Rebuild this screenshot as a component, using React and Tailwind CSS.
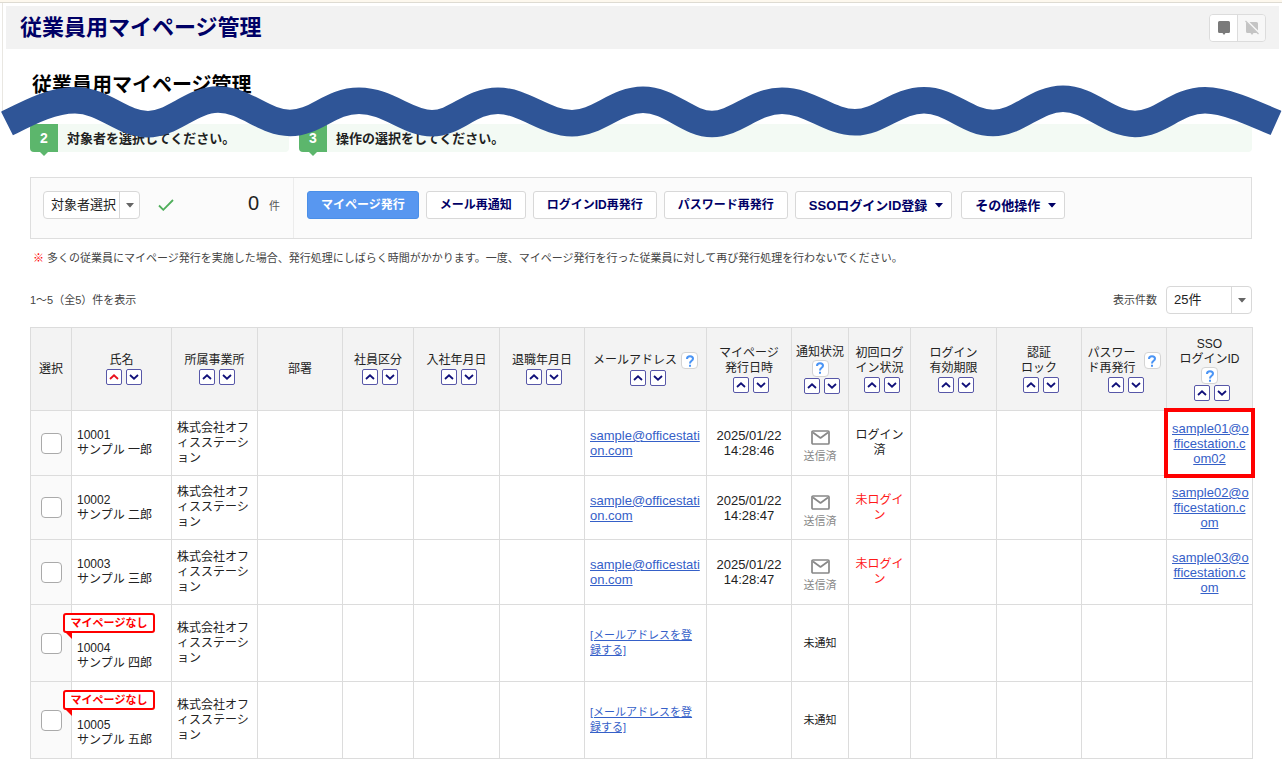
import { useState } from 'react'
import clsx from 'clsx'

const columns = [
  { width: 41, label: '選択' },
  { width: 100, label: '氏名', sort: true, active: 'asc' },
  { width: 86, label: '所属事業所', sort: true },
  { width: 85, label: '部署' },
  { width: 71, label: '社員区分', sort: true },
  { width: 86, label: '入社年月日', sort: true },
  { width: 85, label: '退職年月日', sort: true },
  { width: 122, label: 'メールアドレス', sort: true, help: 'side' },
  { width: 85, label: 'マイページ\n発行日時', sort: true },
  { width: 57, label: '通知状況', sort: true, help: 'below' },
  { width: 62, label: '初回ログ\nイン状況', sort: true },
  { width: 86, label: 'ログイン\n有効期限', sort: true },
  { width: 85, label: '認証\nロック', sort: true },
  { width: 85, label: 'パスワー\nド再発行', sort: true, help: 'side' },
  { width: 86, label: 'SSO\nログインID', sort: true, help: 'below' },
]

const company = '株式会社オフ\nィスステーシ\nョン'

const employees = [
  { id: '10001', name: 'サンプル 一郎', mail: true, issued: '2025/01/22\n14:28:46', login: 'ログイン\n済', sso: 'sample01@o\nfficestation.c\nom02', marked: true, height: 'h-[65px]' },
  { id: '10002', name: 'サンプル 二郎', mail: true, issued: '2025/01/22\n14:28:47', login: '未ログイ\nン', sso: 'sample02@o\nfficestation.c\nom', height: 'h-[64px]' },
  { id: '10003', name: 'サンプル 三郎', mail: true, issued: '2025/01/22\n14:28:47', login: '未ログイ\nン', sso: 'sample03@o\nfficestation.c\nom', height: 'h-[65px]' },
  { id: '10004', name: 'サンプル 四郎', height: 'h-[77px]' },
  { id: '10005', name: 'サンプル 五郎', height: 'h-[77px]' },
]

function Caret() {
  return (
    <svg viewBox="0 0 8 5" className="h-[5px] w-2 flex-shrink-0" fill="currentColor" aria-hidden="true">
      <path d="M0 0h8L4.6 4.100q-.6.6-1.2 0z" />
    </svg>
  )
}

function Dropdown({ label, className, children }) {
  return (
    <div className={clsx('relative h-7 rounded border border-[#d8d8d8] bg-white', className)}>
      <select aria-label={label} className="h-full w-full appearance-none bg-transparent pl-[7px] pr-5 text-[13px] leading-5 text-[#222] outline-none">
        {children}
      </select>
      <span className="pointer-events-none absolute inset-y-0 right-0 flex w-5 items-center justify-center border-l border-[#d8d8d8] text-[#666]">
        <Caret />
      </span>
    </div>
  )
}

function ActionButton({ primary, menu, children }) {
  return (
    <button
      type="button"
      className={clsx(
        'flex h-7 items-center gap-2 whitespace-nowrap rounded-[3px] border font-bold',
        menu ? 'pl-[13px] pr-2 text-[13px]' : 'px-[13px] text-xs',
        primary ? 'border-[#4a8fe8] bg-[#5897f0] text-white' : 'border-[#d8d8d8] bg-white text-[#000066]',
      )}
    >
      {children}
      {menu && <Caret />}
    </button>
  )
}

function HelpButton() {
  return (
    <button type="button" aria-label="ヘルプ" className="flex h-[17px] w-[17px] items-center justify-center rounded border border-[#d4d4d4] bg-white text-[#4a94f5]">
      <svg viewBox="0 0 10 12" className="h-3 w-2.5" fill="none" stroke="currentColor" strokeWidth="2" aria-hidden="true">
        <path d="M2 3.9C2 2 3.3 1.200 5 1.200s3 1 3 2.600C8 5.900 5 5.800 5 8.400" />
        <path d="M5 9.700v2" />
      </svg>
    </button>
  )
}

function SortButtons({ active }) {
  return (
    <div className="mt-px flex">
      {['asc', 'desc'].map(dir => (
        <button
          key={dir}
          type="button"
          aria-label={dir === 'asc' ? '昇順' : '降順'}
          className={clsx(
            'ml-1 flex h-4 w-4 items-center justify-center rounded-[2px] border border-[#5757a8] bg-white',
            active === dir ? 'text-[#e8101c]' : 'text-[#10107a]',
          )}
        >
          <svg viewBox="0 0 10 6" className="h-1.5 w-2.5" fill="none" stroke="currentColor" strokeWidth="1.8" aria-hidden="true">
            <path d={dir === 'asc' ? 'M1 5l4-3.700L9 5' : 'M1 1l4 3.700L9 1'} />
          </svg>
        </button>
      ))}
    </div>
  )
}

function HeaderCell({ column }) {
  return (
    <th scope="col" className="border border-[#dcdcdc] bg-[#f3f3f3] p-0 align-middle font-normal">
      <div className="flex flex-col items-center">
        <div className={clsx('flex items-center', column.label.includes('\n') ? 'gap-2' : 'gap-1')}>
          <span className="whitespace-pre">{column.label}</span>
          {column.help === 'side' && <HelpButton />}
        </div>
        {column.help === 'below' && <HelpButton />}
        {column.sort && <SortButtons active={column.active} />}
      </div>
    </th>
  )
}

function NoPageBadge() {
  return (
    <div className="absolute left-[-9px] top-2 flex h-5 w-[92px] items-center justify-center rounded-[3px] border-2 border-[#ff0000] bg-white text-[11px] font-bold leading-4 text-[#ff0000]">
      マイページなし
      <svg viewBox="0 0 8 8" className="absolute left-0 top-[17px] h-2 w-2" fill="#ff0000" aria-hidden="true">
        <path d="M0 0h7v7z" />
      </svg>
    </div>
  )
}

function Cell({ className, children }) {
  return <td className={clsx('whitespace-pre border border-[#dcdcdc] px-[5px] py-0', className)}>{children}</td>
}

function EmployeeRow({ employee, checked, onToggle }) {
  const { id, name, mail, issued, login, sso, marked, height } = employee
  return (
    <tr className={height}>
      <td className="border border-[#dcdcdc] bg-[#fafafa] p-0">
        <input
          type="checkbox"
          aria-label={name}
          checked={checked}
          onChange={onToggle}
          className="mx-auto block h-[21px] w-[21px] appearance-none rounded border border-[#aaa] bg-white checked:bg-[#5897f0]"
        />
      </td>
      <Cell className={clsx('relative', !mail && 'pt-[26px]')}>
        {!mail && <NoPageBadge />}
        {id + '\n' + name}
      </Cell>
      <Cell>{company}</Cell>
      <Cell />
      <Cell />
      <Cell />
      <Cell />
      <Cell className={mail ? 'text-[13px]' : 'text-[11px]'}>
        <a href={mail ? '#mail' : '#register'} className="text-[#3560c8] underline">
          {mail ? 'sample@officestati\non.com' : '[メールアドレスを登\n録する]'}
        </a>
      </Cell>
      <Cell className="text-center text-[13px]">{issued}</Cell>
      <Cell className="text-center text-[11px]">
        {mail ? (
          <div className="flex flex-col items-center pt-2 text-[#888]">
            <svg viewBox="0 0 19 15" className="h-[15px] w-[19px]" fill="none" stroke="currentColor" strokeWidth="1.7" strokeLinejoin="round" aria-hidden="true">
              <rect x="1" y="1" width="17" height="13" rx="1" />
              <path d="M2 2.500l7.500 5.500L17 2.500" />
            </svg>
            <span className="mt-1">送信済</span>
          </div>
        ) : '未通知'}
      </Cell>
      <Cell className={clsx('text-center', login?.startsWith('未') && 'text-[#ff1a1a]')}>{login}</Cell>
      <Cell />
      <Cell />
      <Cell />
      <Cell className="relative text-center text-[13px]">
        {sso && <a href="#sso" className="text-[#3560c8] underline">{sso}</a>}
        {marked && <span className="pointer-events-none absolute -inset-[3px] border-4 border-[#ff0000]" />}
      </Cell>
    </tr>
  )
}

function Step({ number, children, className }) {
  return (
    <li className={clsx('flex h-7 items-center rounded bg-[#f3faf4]', className)}>
      <span className="relative flex h-7 w-7 items-center justify-center rounded-l bg-[#5cb66c] text-sm font-bold text-white">
        {number}
        <svg viewBox="0 0 8 4" className="absolute left-2.5 top-7 h-1 w-2" fill="#5cb66c" aria-hidden="true">
          <path d="M0 0h8L4 4z" />
        </svg>
      </span>
      <span className="pl-[9px] text-[13px] font-bold">{children}</span>
    </li>
  )
}

function Wave() {
  return (
    <svg viewBox="0 0 1282 60" preserveAspectRatio="none" className="pointer-events-none absolute left-0 top-20 h-[60px] w-full" fill="none" stroke="#2f5597" strokeWidth="26.500" aria-hidden="true">
      <path d="M7 43.500C30 32 52 20.300 75 20.300C104 20.300 122 44.300 148 44.300C172 44.300 192 19.600 218 19.600C246 19.600 264 43 290 43C316 43 330 20.700 359 20.700C388 20.700 408 43.300 432 43.300C456 43.300 470 20.700 498 20.700C524 20.700 546 43.200 572 43.200C598 43.200 616 19.800 643 19.800C670 19.800 688 44 712 44C736 44 754 20.700 782 20.700C810 20.700 829 42.300 855 42.300C880 42.300 897 20.200 924 20.200C951 20.200 967 43 993 43C1019 43 1036 18.700 1063 18.700C1090 18.700 1109 43.900 1135 43.900C1161 43.900 1176 20.300 1205 20.300C1225 20.300 1250 31.500 1276 43" />
    </svg>
  )
}

export default function App() {
  const [selected, setSelected] = useState([])
  const toggle = id => setSelected(prev => (prev.includes(id) ? prev.filter(x => x !== id) : [...prev, id]))

  return (
    <div className="relative bg-white pb-2 font-['Liberation_Sans','Noto_Sans_CJK_JP',sans-serif] text-xs leading-[15px] text-[#222]">
      <div className="h-[3px] border-b border-[#dedbd2] bg-[#fdf8ee]" />
      <span className="absolute left-0.5 top-[3px] h-[110px] w-px bg-[#e9e7e2]" />
      <header className="ml-1.5 mr-[3px] mt-[3px] flex h-[43px] items-center justify-between bg-[#f2f2f2] pl-3.5 pr-[13px]">
        <h1 className="text-[22px] font-bold leading-8 text-[#000066]">従業員用マイページ管理</h1>
        <div className="flex h-7 overflow-hidden rounded border border-[#dcdcdc]">
          <button type="button" aria-label="コメント表示" className="flex w-[27px] items-center justify-center bg-white text-[#7a7a7a]">
            <svg viewBox="0 0 14 15" className="h-[15px] w-3.5" fill="currentColor" aria-hidden="true">
              <path d="M2.500 1h9Q13 1 13 2.500v9q0 1.500-1.500 1.500H8.500L7 15 5.500 13H2.500Q1 13 1 11.500v-9Q1 1 2.500 1z" />
            </svg>
          </button>
          <button type="button" aria-label="コメント非表示" className="flex w-7 items-center justify-center border-l border-[#dcdcdc] bg-[#f7f7f7] text-[#c4c4c4]">
            <svg viewBox="0 0 14 15" className="h-[15px] w-3.5" aria-hidden="true">
              <path d="M2.500 2h9Q13 2 13 3.500v8q0 1.500-1.500 1.500H8.500L7 15 5.500 13H2.500Q1 13 1 11.500v-8Q1 2 2.500 2z" fill="currentColor" />
              <path d="M1 0l13 13" stroke="#f7f7f7" strokeWidth="2" />
              <path d="M.5 1l13 13" stroke="currentColor" strokeWidth="1.300" />
            </svg>
          </button>
        </div>
      </header>

      <main className="px-[30px]">
        <h2 className="mt-[21px] pl-0.5 text-xl font-bold leading-[30px] text-black">従業員用マイページ管理</h2>

        <ol className="mt-6 flex gap-2.5">
          <Step number="2" className="w-[259px]">対象者を選択してください。</Step>
          <Step number="3" className="flex-1">操作の選択をしてください。</Step>
        </ol>
        <Wave />

        <section className="mt-[25px] flex h-[62px] border border-[#dedede] bg-[#fbfbfb]">
          <div className="flex w-[263px] items-start border-r border-[#ececec] pl-3 pr-[13px] pt-[13px]">
            <Dropdown label="対象者選択" className="w-[97px]">
              <option>対象者選択</option>
            </Dropdown>
            <svg viewBox="0 0 16 12" className="ml-[18px] mt-2 h-3 w-4" fill="none" stroke="#4fae5b" strokeWidth="1.800" aria-hidden="true">
              <path d="M1 6.500l4.300 4.300L15 1" />
            </svg>
            <p className="ml-auto text-[11px] leading-7 text-[#555]">
              <span className="mr-2.5 text-xl leading-6 text-[#222]">{selected.length}</span>件
            </p>
          </div>
          <div className="flex gap-[7px] pl-[13px] pt-[13px]">
            <ActionButton primary>マイページ発行</ActionButton>
            <ActionButton>メール再通知</ActionButton>
            <ActionButton>ログインID再発行</ActionButton>
            <ActionButton>パスワード再発行</ActionButton>
            <div className="flex gap-[9px]">
              <ActionButton menu>SSOログインID登録</ActionButton>
              <ActionButton menu>その他操作</ActionButton>
            </div>
          </div>
        </section>

        <p className="mt-3 pl-[3px] text-[11px] text-[#444]">
          <span className="mr-[3px] font-bold text-[#ff0000]">※</span>
          多くの従業員にマイページ発行を実施した場合、発行処理にしばらく時間がかかります。一度、マイページ発行を行った従業員に対して再び発行処理を行わないでください。
        </p>

        <div className="mt-5 flex items-center justify-between text-[11px] text-[#444]">
          <span>1～5（全5）件を表示</span>
          <div className="flex items-center gap-[9px]">
            <span>表示件数</span>
            <Dropdown label="表示件数" className="w-[86px]">
              <option>25件</option>
            </Dropdown>
          </div>
        </div>

        <table className="mt-[13px] w-full table-fixed border-collapse">
          <colgroup>
            {columns.map(column => (
              <col key={column.label} style={{ width: column.width }} />
            ))}
          </colgroup>
          <thead>
            <tr className="h-[83px]">
              {columns.map(column => (
                <HeaderCell key={column.label} column={column} />
              ))}
            </tr>
          </thead>
          <tbody>
            {employees.map(employee => (
              <EmployeeRow
                key={employee.id}
                employee={employee}
                checked={selected.includes(employee.id)}
                onToggle={() => toggle(employee.id)}
              />
            ))}
          </tbody>
        </table>
      </main>
    </div>
  )
}
